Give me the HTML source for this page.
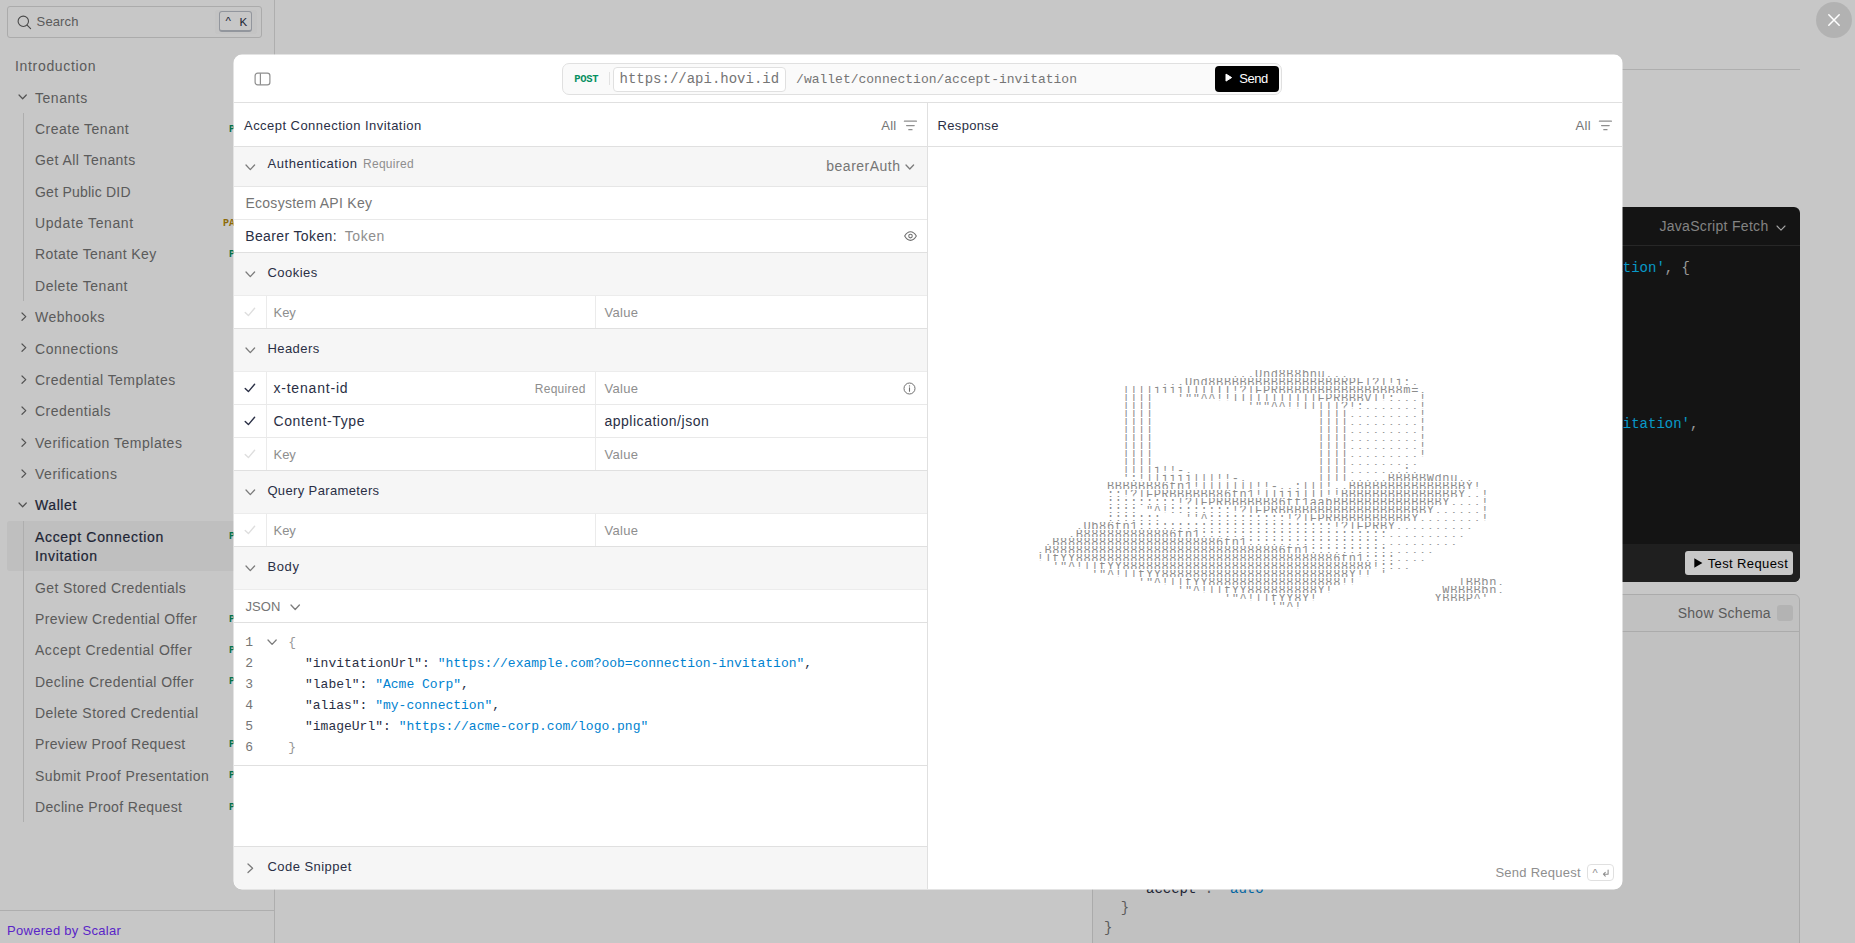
<!DOCTYPE html>
<html lang="en"><head><meta charset="utf-8"><title>Hovi API Reference</title>
<style>
*{box-sizing:border-box}
html,body{margin:0;padding:0}
body{width:1855px;height:943px;overflow:hidden;background:#fff;position:relative;
  font-family:"Liberation Sans",sans-serif;font-size:14px;color:#2a2f45;}
.abs{position:absolute}
.mono{font-family:"Liberation Mono",monospace}
svg{display:block;overflow:visible}

/* ---------- sidebar ---------- */
#sidebar{position:absolute;left:0;top:0;width:275px;height:943px;border-right:1px solid #dfdfdf;background:#fff}
#search{position:absolute;left:7px;top:6px;width:255px;height:32px;border:1px solid #dbdbdb;border-radius:3px}
#search .lbl{position:absolute;left:28.6px;top:7.4px;font-size:13px;line-height:16px;color:#757575;letter-spacing:.12px}
#search .hov{position:absolute;left:207px;top:3px;width:42px;height:24px;border-radius:3px;background:#fbfbfb}
#search .kbd{position:absolute;left:211px;top:4px;width:33px;height:21px;border:1px solid #bcc0c9;border-bottom-width:2px;border-radius:3px;background:#fff;
  font-size:11.5px;color:#2a2f45}
#nav{position:absolute;left:0;top:51.2px;width:274px}
.it{position:relative;height:31.39px;line-height:19.39px;padding:6px 0;font-size:14px;color:#757575;white-space:nowrap}
.it .t{position:absolute;left:35px;top:6px}
.it.top .t{left:15px}
.it.grp.open.act .t{color:#2a2f45;-webkit-text-stroke:.2px #2a2f45}
.it .chev{position:absolute;left:18.35px;top:11.8px}
.it .m{position:absolute;right:21px;top:5.6px;font-family:"Liberation Mono",monospace;font-weight:bold;font-size:10px;letter-spacing:0}
.m.post{color:#069061}.m.patch{color:#b5890b}.m.get{color:#0082d0}.m.del{color:#dc1b19}
.it.two{height:50.78px}
.it.sel{color:#2a2f45}
.it.sel .t{-webkit-text-stroke:.2px #2a2f45}
.selbg{position:absolute;left:7px;top:-.7px;width:260px;height:50px;border-radius:3px;background:#f5f5f5}
.vline{position:absolute;left:23px;width:1px;background:#dfdfdf}
#sfoot{position:absolute;left:0;top:910px;width:274px;height:33px;border-top:1px solid #dfdfdf}
#sfoot span{position:absolute;left:7px;top:12px;font-size:13px;line-height:16px;color:#7430ff;letter-spacing:.3px}

/* ---------- page content behind modal ---------- */
#hr1{position:absolute;left:331px;top:69px;width:1469px;height:1px;background:#dfdfdf}
#dark{position:absolute;left:1092px;top:207px;width:708px;height:375px;border-radius:6px;background:#1a1a1a;overflow:hidden}
#dark .hd{position:absolute;left:0;top:0;width:100%;height:39px;border-bottom:1px solid #323232}
#dark .lang{position:absolute;right:31.5px;top:10.5px;font-size:14px;line-height:17px;color:#a8a8a8;letter-spacing:.3px;white-space:nowrap}
#dark .chv{position:absolute;right:14.5px;top:17.5px}
#dark pre{position:absolute;left:43.5px;top:52.3px;margin:0;font-family:"Liberation Mono",monospace;font-size:14px;line-height:19.4px;color:#c4c4c4;white-space:pre}
#dark pre .s{color:#0bc4ff}
#dark .ft{position:absolute;left:0;top:337px;width:100%;height:38px;background:#282828}
#dark .btn{position:absolute;left:593px;top:344px;width:108px;height:24px;border-radius:3px;background:#fff;color:#000}
#dark .btn span{position:absolute;left:22.7px;top:4.9px;font-size:13px;line-height:16px;letter-spacing:.38px;white-space:nowrap}
#card{position:absolute;left:1092px;top:594px;width:708px;height:400px;border:1px solid #dcdcdc;border-radius:6px;background:#f8f8f8}
#card .hd{position:absolute;left:0;top:0;width:100%;height:37px;border-bottom:1px solid #dcdcdc}
#card .ss{position:absolute;left:584.7px;top:9.6px;font-size:14px;line-height:17px;color:#757575;letter-spacing:.27px;white-space:nowrap}
#card .cb{position:absolute;left:684px;top:10px;width:16px;height:16px;border-radius:3px;background:#e6e6e6}
#card pre{position:absolute;left:11px;top:0;margin:0;font-family:"Liberation Mono",monospace;font-size:14px;line-height:19.45px;color:#757575;white-space:pre}
#card pre .k{color:#2a2f45}#card pre .s{color:#0082d0}

#overlay{position:absolute;left:0;top:0;width:1855px;height:943px;background:rgba(0,0,0,.2196)}
#close{position:absolute;left:1816px;top:2px;width:36px;height:36px;border-radius:18px;background:rgba(0,0,0,.1)}
#close svg{position:absolute;left:12px;top:12px}

/* ---------- modal ---------- */
#mbg{position:absolute;left:233px;top:54px}
#modal{position:absolute;left:234px;top:55px;width:1388px;height:834px;border-radius:8px;overflow:hidden;background:#fff}

#modal .artrow{position:absolute;left:0;height:7px;width:480px;overflow:hidden}
#modal .artrow span{position:absolute;left:0;top:1.0px;font-family:"Liberation Mono",monospace;font-size:12px;letter-spacing:.6px;line-height:8px;color:#8c8c8c;white-space:pre}
</style></head>
<body>
<div id="sidebar">
<div id="search"><svg class="abs" style="left:9px;top:8px" width="15" height="15" viewBox="0 0 15 15"><circle cx="6.3" cy="6.3" r="5.2" fill="none" stroke="#5f5f5f" stroke-width="1.1"/><path d="M10.1 10.1 L13.6 13.6" stroke="#5f5f5f" stroke-width="1.1" stroke-linecap="round"/></svg><span class="lbl">Search</span><span class="hov"></span><span class="kbd"><span class="abs" style="left:5.5px;top:2.5px;line-height:13px">^</span><span class="abs" style="left:19.5px;top:3.5px;line-height:13px">K</span></span></div>
<div id="nav">
<div class="it top"><span class="t" style="letter-spacing:0.677px">Introduction</span></div>
<div class="it grp open"><span class="chev"><svg width="9.3" height="5.795999999999999" viewBox="-1 -1 9.3 5.795999999999999"><path d="M0 0 L3.65 3.796 L7.3 0" fill="none" stroke="#6a6a6a" stroke-width="1.2" stroke-linecap="round" stroke-linejoin="round"/></svg></span><span class="t" style="letter-spacing:0.544px">Tenants</span></div>
<div class="it "><span class="t" style="letter-spacing:0.492px">Create Tenant</span><span class="m post">POST</span></div>
<div class="it "><span class="t" style="letter-spacing:0.449px">Get All Tenants</span><span class="m get">GET</span></div>
<div class="it "><span class="t" style="letter-spacing:0.232px">Get Public DID</span><span class="m get">GET</span></div>
<div class="it "><span class="t" style="letter-spacing:0.607px">Update Tenant</span><span class="m patch">PATCH</span></div>
<div class="it "><span class="t" style="letter-spacing:0.392px">Rotate Tenant Key</span><span class="m post">POST</span></div>
<div class="it "><span class="t" style="letter-spacing:0.522px">Delete Tenant</span><span class="m del">DEL</span></div>
<div class="it grp"><span class="chev" style="left:20.5px;top:9.9px"><svg width="5.795999999999999" height="9.3" viewBox="-1 -1 5.795999999999999 9.3"><path d="M0 0 L3.796 3.65 L0 7.3" fill="none" stroke="#6a6a6a" stroke-width="1.2" stroke-linecap="round" stroke-linejoin="round"/></svg></span><span class="t" style="letter-spacing:0.501px">Webhooks</span></div>
<div class="it grp"><span class="chev" style="left:20.5px;top:9.9px"><svg width="5.795999999999999" height="9.3" viewBox="-1 -1 5.795999999999999 9.3"><path d="M0 0 L3.796 3.65 L0 7.3" fill="none" stroke="#6a6a6a" stroke-width="1.2" stroke-linecap="round" stroke-linejoin="round"/></svg></span><span class="t" style="letter-spacing:0.527px">Connections</span></div>
<div class="it grp"><span class="chev" style="left:20.5px;top:9.9px"><svg width="5.795999999999999" height="9.3" viewBox="-1 -1 5.795999999999999 9.3"><path d="M0 0 L3.796 3.65 L0 7.3" fill="none" stroke="#6a6a6a" stroke-width="1.2" stroke-linecap="round" stroke-linejoin="round"/></svg></span><span class="t" style="letter-spacing:0.471px">Credential Templates</span></div>
<div class="it grp"><span class="chev" style="left:20.5px;top:9.9px"><svg width="5.795999999999999" height="9.3" viewBox="-1 -1 5.795999999999999 9.3"><path d="M0 0 L3.796 3.65 L0 7.3" fill="none" stroke="#6a6a6a" stroke-width="1.2" stroke-linecap="round" stroke-linejoin="round"/></svg></span><span class="t" style="letter-spacing:0.479px">Credentials</span></div>
<div class="it grp"><span class="chev" style="left:20.5px;top:9.9px"><svg width="5.795999999999999" height="9.3" viewBox="-1 -1 5.795999999999999 9.3"><path d="M0 0 L3.796 3.65 L0 7.3" fill="none" stroke="#6a6a6a" stroke-width="1.2" stroke-linecap="round" stroke-linejoin="round"/></svg></span><span class="t" style="letter-spacing:0.523px">Verification Templates</span></div>
<div class="it grp"><span class="chev" style="left:20.5px;top:9.9px"><svg width="5.795999999999999" height="9.3" viewBox="-1 -1 5.795999999999999 9.3"><path d="M0 0 L3.796 3.65 L0 7.3" fill="none" stroke="#6a6a6a" stroke-width="1.2" stroke-linecap="round" stroke-linejoin="round"/></svg></span><span class="t" style="letter-spacing:0.535px">Verifications</span></div>
<div class="it grp open act"><span class="chev"><svg width="9.3" height="5.795999999999999" viewBox="-1 -1 9.3 5.795999999999999"><path d="M0 0 L3.65 3.796 L7.3 0" fill="none" stroke="#6a6a6a" stroke-width="1.2" stroke-linecap="round" stroke-linejoin="round"/></svg></span><span class="t" style="letter-spacing:0.585px">Wallet</span></div>
<div class="it two sel"><span class="selbg"></span><span class="t" style="letter-spacing:0.668px">Accept Connection<br>Invitation</span><span class="m post">POST</span></div>
<div class="it "><span class="t" style="letter-spacing:0.395px">Get Stored Credentials</span><span class="m get">GET</span></div>
<div class="it "><span class="t" style="letter-spacing:0.420px">Preview Credential Offer</span><span class="m post">POST</span></div>
<div class="it "><span class="t" style="letter-spacing:0.529px">Accept Credential Offer</span><span class="m post">POST</span></div>
<div class="it "><span class="t" style="letter-spacing:0.415px">Decline Credential Offer</span><span class="m post">POST</span></div>
<div class="it "><span class="t" style="letter-spacing:0.430px">Delete Stored Credential</span><span class="m del">DEL</span></div>
<div class="it "><span class="t" style="letter-spacing:0.351px">Preview Proof Request</span><span class="m post">POST</span></div>
<div class="it "><span class="t" style="letter-spacing:0.428px">Submit Proof Presentation</span><span class="m post">POST</span></div>
<div class="it "><span class="t" style="letter-spacing:0.341px">Decline Proof Request</span><span class="m post">POST</span></div>
</div>
<div class="vline" style="top:113px;height:188px"></div>
<div class="vline" style="top:521px;height:301px"></div>
<div id="sfoot"><span>Powered by Scalar</span></div>
</div>
<div id="hr1"></div>
<div id="dark"><div class="hd"></div><span class="lang">JavaScript Fetch</span><span class="chv"><svg width="10.0" height="6.16" viewBox="-1 -1 10.0 6.16"><path d="M0 0 L4.0 4.16 L8.0 0" fill="none" stroke="#d0d0d0" stroke-width="1.1" stroke-linecap="round" stroke-linejoin="round"/></svg></span><pre>fetch(<span class="s">'https://api.hovi.id/wallet/connection/accept-invitation'</span>, {
  method: <span class="s">'POST'</span>,
  headers: {
    <span class="s">'x-tenant-id'</span>: <span class="s">''</span>,
    <span class="s">'Content-Type'</span>: <span class="s">'application/json'</span>,
    Authorization: <span class="s">'Bearer YOUR_SECRET_TOKEN'</span>
  },
  body: JSON.stringify({
    invitationUrl: <span class="s">'https://example.com?oob=connection-invitation'</span>,
    label: <span class="s">'Acme Corp'</span>,
    alias: <span class="s">'my-connection'</span>,
    imageUrl: <span class="s">'https://acme-corp.com/logo.png'</span>
  })
})</pre><div class="ft"></div><div class="btn"><svg class="abs" style="left:9px;top:7px" width="9" height="10" viewBox="0 0 9 10"><path d="M0.3 0.3 L8.4 5 L0.3 9.7 Z" fill="#000"/></svg><span>Test Request</span></div></div>
<div id="card"><div class="hd"></div><span class="ss">Show Schema</span><span class="cb"></span><pre style="top:284.9px">    <span class="k">"accept"</span>: <span class="s">"auto"</span>
  }
}</pre></div>
<div id="overlay"></div>
<div id="close"><svg width="12" height="12" viewBox="0 0 12 12"><path d="M0.8 0.8 L11.2 11.2 M11.2 0.8 L0.8 11.2" stroke="#fff" stroke-width="1.5" stroke-linecap="round"/></svg></div>
<svg id="mbg" width="1391" height="837" viewBox="0 0 1391 837"><rect x="0.5" y="0.5" width="1389" height="835" rx="8.5" fill="#fff"/></svg>
<div id="modal">
<svg style="position:absolute;left:19.50px;top:17.00px" width="17" height="14" viewBox="0 0 17 14"><rect x="1.1" y="1.1" width="14.8" height="11.8" rx="2.6" fill="none" stroke="#8e8e8e" stroke-width="1.2"/><path d="M6.4 1.2 V12.8" stroke="#8e8e8e" stroke-width="1.2"/></svg>
<div style="position:absolute;left:328px;top:8px;width:720px;height:32px;border:1px solid #e0e0e0;border-radius:7px;background:#fafafa"></div>
<span style="position:absolute;left:340.30px;top:16.05px;font-size:10.5px;line-height:16.5px;color:#069061;font-family:'Liberation Mono',monospace;white-space:pre;font-weight:bold;letter-spacing:-0.301px;">POST</span>
<div style="position:absolute;left:375px;top:17px;width:1px;height:13px;background:#e2e2e2"></div>
<div style="position:absolute;left:379px;top:12px;width:173px;height:25px;border:1px solid #e0e0e0;border-radius:4px;background:#fff"></div>
<span style="position:absolute;left:385.50px;top:14.47px;font-size:14px;line-height:20px;color:#757575;font-family:'Liberation Mono',monospace;white-space:pre;">https://api.hovi.id</span>
<span style="position:absolute;left:562.10px;top:15.03px;font-size:13px;line-height:19px;color:#757575;font-family:'Liberation Mono',monospace;white-space:pre;">/wallet/connection/accept-invitation</span>
<div style="position:absolute;left:981px;top:11px;width:64px;height:26px;border-radius:4px;background:#000"></div>
<svg style="position:absolute;left:991.20px;top:18.40px" width="8" height="10" viewBox="0 0 8 10"><path d="M1 1.1 L6.6 4.6 L1 8.1 Z" fill="#fff" stroke="#fff" stroke-width="1" stroke-linejoin="round"/></svg>
<span style="position:absolute;left:1005.30px;top:14.20px;font-size:13px;line-height:19px;color:#fff;font-family:'Liberation Sans',sans-serif;white-space:pre;letter-spacing:-0.487px;">Send</span>
<div style="position:absolute;left:0px;top:47px;width:1388px;height:1px;background:#e0e0e0"></div>
<span style="position:absolute;left:10.00px;top:61.00px;font-size:13px;line-height:19px;color:#2a2f45;font-family:'Liberation Sans',sans-serif;white-space:pre;letter-spacing:0.460px;">Accept Connection Invitation</span>
<span style="position:absolute;left:647.20px;top:60.80px;font-size:13px;line-height:19px;color:#757575;font-family:'Liberation Sans',sans-serif;white-space:pre;letter-spacing:0.276px;">All</span>
<svg style="position:absolute;left:669.60px;top:65.40px" width="13" height="11" viewBox="0 0 13 11"><path d="M0.4 1.2 H12.4 M2.6 5.5 H10.2 M4.8 9.7 H8" stroke="#8e8e8e" stroke-width="1.25" stroke-linecap="round" fill="none"/></svg>
<span style="position:absolute;left:703.60px;top:60.80px;font-size:13px;line-height:19px;color:#2a2f45;font-family:'Liberation Sans',sans-serif;white-space:pre;letter-spacing:0.323px;">Response</span>
<span style="position:absolute;left:1341.40px;top:60.80px;font-size:13px;line-height:19px;color:#757575;font-family:'Liberation Sans',sans-serif;white-space:pre;letter-spacing:0.376px;">All</span>
<svg style="position:absolute;left:1364.80px;top:65.40px" width="13" height="11" viewBox="0 0 13 11"><path d="M0.4 1.2 H12.4 M2.6 5.5 H10.2 M4.8 9.7 H8" stroke="#8e8e8e" stroke-width="1.25" stroke-linecap="round" fill="none"/></svg>
<div style="position:absolute;left:0px;top:91px;width:1388px;height:1px;background:#e0e0e0"></div>
<div style="position:absolute;left:693px;top:48px;width:1px;height:786px;background:#e0e0e0"></div>
<div style="position:absolute;left:0px;top:92px;width:693px;height:39px;background:#f6f6f6"></div>
<svg style="position:absolute;left:10.70px;top:108.70px" width="10.6" height="6.601" viewBox="0 0 10.6 6.601"><path d="M1 1 L5.3 5.601 L9.6 1" fill="none" stroke="#7c7c7c" stroke-width="1.3" stroke-linecap="round" stroke-linejoin="round"/></svg>
<span style="position:absolute;left:33.60px;top:98.60px;font-size:13px;line-height:19px;color:#2a2f45;font-family:'Liberation Sans',sans-serif;white-space:pre;letter-spacing:0.531px;">Authentication</span>
<span style="position:absolute;left:129.00px;top:100.14px;font-size:12px;line-height:18px;color:#8e8e8e;font-family:'Liberation Sans',sans-serif;white-space:pre;letter-spacing:0.272px;">Required</span>
<span style="position:absolute;left:592.30px;top:100.55px;font-size:14px;line-height:20px;color:#757575;font-family:'Liberation Sans',sans-serif;white-space:pre;letter-spacing:0.492px;">bearerAuth</span>
<svg style="position:absolute;left:671.40px;top:109.17px" width="9.6" height="6.066" viewBox="0 0 9.6 6.066"><path d="M1 1 L4.8 5.066 L8.6 1" fill="none" stroke="#7c7c7c" stroke-width="1.3" stroke-linecap="round" stroke-linejoin="round"/></svg>
<div style="position:absolute;left:0px;top:131px;width:693px;height:1px;background:#e6e6e6"></div>
<span style="position:absolute;left:11.40px;top:138.15px;font-size:14px;line-height:20px;color:#757575;font-family:'Liberation Sans',sans-serif;white-space:pre;letter-spacing:0.278px;">Ecosystem API Key</span>
<div style="position:absolute;left:0px;top:164px;width:693px;height:1px;background:#e9e9e9"></div>
<span style="position:absolute;left:11.20px;top:171.15px;font-size:14px;line-height:20px;color:#2a2f45;font-family:'Liberation Sans',sans-serif;white-space:pre;letter-spacing:0.375px;">Bearer Token:</span>
<span style="position:absolute;left:110.80px;top:171.15px;font-size:14px;line-height:20px;color:#8e8e8e;font-family:'Liberation Sans',sans-serif;white-space:pre;letter-spacing:0.560px;">Token</span>
<svg style="position:absolute;left:669.50px;top:176.00px" width="13" height="10.2" viewBox="0 0 14 11"><path d="M0.7 5.5 C2.6 2.2 4.8 0.9 7 0.9 C9.2 0.9 11.4 2.2 13.3 5.5 C11.4 8.8 9.2 10.1 7 10.1 C4.8 10.1 2.6 8.8 0.7 5.5 Z" fill="none" stroke="#6f6f6f" stroke-width="1.15"/><circle cx="7" cy="5.5" r="1.9" fill="none" stroke="#6f6f6f" stroke-width="1.15"/></svg>
<div style="position:absolute;left:0px;top:197px;width:693px;height:1px;background:#e0e0e0"></div>
<div style="position:absolute;left:0px;top:198px;width:693px;height:43px;background:#f6f6f6;border-bottom:1px solid #ececec"></div><svg style="position:absolute;left:10.70px;top:215.65px" width="10.6" height="6.601" viewBox="0 0 10.6 6.601"><path d="M1 1 L5.3 5.601 L9.6 1" fill="none" stroke="#7c7c7c" stroke-width="1.3" stroke-linecap="round" stroke-linejoin="round"/></svg><span style="position:absolute;left:33.40px;top:207.70px;font-size:13px;line-height:19px;color:#2a2f45;font-family:'Liberation Sans',sans-serif;white-space:pre;letter-spacing:0.489px;">Cookies</span>
<svg style="position:absolute;left:10.00px;top:252.00px" width="12" height="10" viewBox="0 0 12 10"><path d="M1.2 5.6 L4.4 8.6 L10.6 1.2" fill="none" stroke="#dedede" stroke-width="1.4" stroke-linecap="round" stroke-linejoin="round"/></svg><div style="position:absolute;left:32px;top:241px;width:1px;height:32px;background:#ebebeb"></div><div style="position:absolute;left:361px;top:241px;width:1px;height:32px;background:#ebebeb"></div><span style="position:absolute;left:39.60px;top:247.50px;font-size:13px;line-height:19px;color:#8e8e8e;font-family:'Liberation Sans',sans-serif;white-space:pre;letter-spacing:-0.101px;">Key</span><span style="position:absolute;left:370.60px;top:247.50px;font-size:13px;line-height:19px;color:#8e8e8e;font-family:'Liberation Sans',sans-serif;white-space:pre;letter-spacing:0.278px;">Value</span><div style="position:absolute;left:0px;top:273px;width:693px;height:1px;background:#e0e0e0"></div>
<div style="position:absolute;left:0px;top:274px;width:693px;height:43px;background:#f6f6f6;border-bottom:1px solid #ececec"></div><svg style="position:absolute;left:10.70px;top:291.65px" width="10.6" height="6.601" viewBox="0 0 10.6 6.601"><path d="M1 1 L5.3 5.601 L9.6 1" fill="none" stroke="#7c7c7c" stroke-width="1.3" stroke-linecap="round" stroke-linejoin="round"/></svg><span style="position:absolute;left:33.40px;top:283.70px;font-size:13px;line-height:19px;color:#2a2f45;font-family:'Liberation Sans',sans-serif;white-space:pre;letter-spacing:0.460px;">Headers</span>
<svg style="position:absolute;left:10.00px;top:328.00px" width="12" height="10" viewBox="0 0 12 10"><path d="M1.2 5.6 L4.4 8.6 L10.6 1.2" fill="none" stroke="#2a2f45" stroke-width="1.4" stroke-linecap="round" stroke-linejoin="round"/></svg><div style="position:absolute;left:32px;top:317px;width:1px;height:32px;background:#ebebeb"></div><div style="position:absolute;left:361px;top:317px;width:1px;height:32px;background:#ebebeb"></div><span style="position:absolute;left:39.40px;top:322.65px;font-size:14px;line-height:20px;color:#2a2f45;font-family:'Liberation Sans',sans-serif;white-space:pre;letter-spacing:0.806px;">x-tenant-id</span><span style="position:absolute;left:370.60px;top:323.50px;font-size:13px;line-height:19px;color:#8e8e8e;font-family:'Liberation Sans',sans-serif;white-space:pre;letter-spacing:0.278px;">Value</span><span style="position:absolute;left:300.80px;top:324.94px;font-size:12px;line-height:18px;color:#8e8e8e;font-family:'Liberation Sans',sans-serif;white-space:pre;letter-spacing:0.258px;">Required</span><svg style="position:absolute;left:669.40px;top:326.50px" width="13" height="13" viewBox="0 0 13 13"><circle cx="6.5" cy="6.5" r="5.5" fill="none" stroke="#6f6f6f" stroke-width="1"/><path d="M6.5 5.9 V9.3" stroke="#6f6f6f" stroke-width="1.1" stroke-linecap="round"/><circle cx="6.5" cy="3.9" r="0.7" fill="#6f6f6f"/></svg><div style="position:absolute;left:0px;top:349px;width:693px;height:1px;background:#e9e9e9"></div>
<svg style="position:absolute;left:10.00px;top:361.00px" width="12" height="10" viewBox="0 0 12 10"><path d="M1.2 5.6 L4.4 8.6 L10.6 1.2" fill="none" stroke="#2a2f45" stroke-width="1.4" stroke-linecap="round" stroke-linejoin="round"/></svg><div style="position:absolute;left:32px;top:350px;width:1px;height:32px;background:#ebebeb"></div><div style="position:absolute;left:361px;top:350px;width:1px;height:32px;background:#ebebeb"></div><span style="position:absolute;left:39.40px;top:355.65px;font-size:14px;line-height:20px;color:#2a2f45;font-family:'Liberation Sans',sans-serif;white-space:pre;letter-spacing:0.650px;">Content-Type</span><span style="position:absolute;left:370.40px;top:355.65px;font-size:14px;line-height:20px;color:#2a2f45;font-family:'Liberation Sans',sans-serif;white-space:pre;letter-spacing:0.526px;">application/json</span><div style="position:absolute;left:0px;top:382px;width:693px;height:1px;background:#e9e9e9"></div>
<svg style="position:absolute;left:10.00px;top:394.00px" width="12" height="10" viewBox="0 0 12 10"><path d="M1.2 5.6 L4.4 8.6 L10.6 1.2" fill="none" stroke="#dedede" stroke-width="1.4" stroke-linecap="round" stroke-linejoin="round"/></svg><div style="position:absolute;left:32px;top:383px;width:1px;height:32px;background:#ebebeb"></div><div style="position:absolute;left:361px;top:383px;width:1px;height:32px;background:#ebebeb"></div><span style="position:absolute;left:39.60px;top:389.50px;font-size:13px;line-height:19px;color:#8e8e8e;font-family:'Liberation Sans',sans-serif;white-space:pre;letter-spacing:-0.101px;">Key</span><span style="position:absolute;left:370.60px;top:389.50px;font-size:13px;line-height:19px;color:#8e8e8e;font-family:'Liberation Sans',sans-serif;white-space:pre;letter-spacing:0.278px;">Value</span><div style="position:absolute;left:0px;top:415px;width:693px;height:1px;background:#e0e0e0"></div>
<div style="position:absolute;left:0px;top:416px;width:693px;height:43px;background:#f6f6f6;border-bottom:1px solid #ececec"></div><svg style="position:absolute;left:10.70px;top:433.65px" width="10.6" height="6.601" viewBox="0 0 10.6 6.601"><path d="M1 1 L5.3 5.601 L9.6 1" fill="none" stroke="#7c7c7c" stroke-width="1.3" stroke-linecap="round" stroke-linejoin="round"/></svg><span style="position:absolute;left:33.40px;top:425.70px;font-size:13px;line-height:19px;color:#2a2f45;font-family:'Liberation Sans',sans-serif;white-space:pre;letter-spacing:0.366px;">Query Parameters</span>
<svg style="position:absolute;left:10.00px;top:470.00px" width="12" height="10" viewBox="0 0 12 10"><path d="M1.2 5.6 L4.4 8.6 L10.6 1.2" fill="none" stroke="#dedede" stroke-width="1.4" stroke-linecap="round" stroke-linejoin="round"/></svg><div style="position:absolute;left:32px;top:459px;width:1px;height:32px;background:#ebebeb"></div><div style="position:absolute;left:361px;top:459px;width:1px;height:32px;background:#ebebeb"></div><span style="position:absolute;left:39.60px;top:465.50px;font-size:13px;line-height:19px;color:#8e8e8e;font-family:'Liberation Sans',sans-serif;white-space:pre;letter-spacing:-0.101px;">Key</span><span style="position:absolute;left:370.60px;top:465.50px;font-size:13px;line-height:19px;color:#8e8e8e;font-family:'Liberation Sans',sans-serif;white-space:pre;letter-spacing:0.278px;">Value</span><div style="position:absolute;left:0px;top:491px;width:693px;height:1px;background:#e0e0e0"></div>
<div style="position:absolute;left:0px;top:492px;width:693px;height:43px;background:#f6f6f6;border-bottom:1px solid #ececec"></div><svg style="position:absolute;left:10.70px;top:509.65px" width="10.6" height="6.601" viewBox="0 0 10.6 6.601"><path d="M1 1 L5.3 5.601 L9.6 1" fill="none" stroke="#7c7c7c" stroke-width="1.3" stroke-linecap="round" stroke-linejoin="round"/></svg><span style="position:absolute;left:33.40px;top:501.70px;font-size:13px;line-height:19px;color:#2a2f45;font-family:'Liberation Sans',sans-serif;white-space:pre;letter-spacing:0.656px;">Body</span>
<span style="position:absolute;left:11.60px;top:541.50px;font-size:13px;line-height:19px;color:#757575;font-family:'Liberation Sans',sans-serif;white-space:pre;letter-spacing:0.009px;">JSON</span>
<svg style="position:absolute;left:55.80px;top:548.65px" width="10.4" height="6.494000000000001" viewBox="0 0 10.4 6.494000000000001"><path d="M1 1 L5.2 5.494000000000001 L9.4 1" fill="none" stroke="#7c7c7c" stroke-width="1.3" stroke-linecap="round" stroke-linejoin="round"/></svg>
<div style="position:absolute;left:0px;top:567px;width:693px;height:1px;background:#e0e0e0"></div>
<span style="position:absolute;left:11.20px;top:578.03px;font-size:13px;line-height:19px;color:#757575;font-family:'Liberation Mono',monospace;white-space:pre;">1</span>
<span style="position:absolute;left:55.40px;top:578.03px;font-family:'Liberation Mono',monospace;font-size:13px;line-height:19px;white-space:pre"><span style="color:#989898;position:relative;left:-1.2px">{</span></span>
<span style="position:absolute;left:11.20px;top:599.03px;font-size:13px;line-height:19px;color:#757575;font-family:'Liberation Mono',monospace;white-space:pre;">2</span>
<span style="position:absolute;left:55.40px;top:599.03px;font-family:'Liberation Mono',monospace;font-size:13px;line-height:19px;white-space:pre"><span style="color:#2a2f45">  "invitationUrl"</span><span style="color:#2a2f45">: </span><span style="color:#0082d0">"https://example.com?oob=connection-invitation"</span><span style="color:#2a2f45">,</span></span>
<span style="position:absolute;left:11.20px;top:620.03px;font-size:13px;line-height:19px;color:#757575;font-family:'Liberation Mono',monospace;white-space:pre;">3</span>
<span style="position:absolute;left:55.40px;top:620.03px;font-family:'Liberation Mono',monospace;font-size:13px;line-height:19px;white-space:pre"><span style="color:#2a2f45">  "label"</span><span style="color:#2a2f45">: </span><span style="color:#0082d0">"Acme Corp"</span><span style="color:#2a2f45">,</span></span>
<span style="position:absolute;left:11.20px;top:641.03px;font-size:13px;line-height:19px;color:#757575;font-family:'Liberation Mono',monospace;white-space:pre;">4</span>
<span style="position:absolute;left:55.40px;top:641.03px;font-family:'Liberation Mono',monospace;font-size:13px;line-height:19px;white-space:pre"><span style="color:#2a2f45">  "alias"</span><span style="color:#2a2f45">: </span><span style="color:#0082d0">"my-connection"</span><span style="color:#2a2f45">,</span></span>
<span style="position:absolute;left:11.20px;top:662.03px;font-size:13px;line-height:19px;color:#757575;font-family:'Liberation Mono',monospace;white-space:pre;">5</span>
<span style="position:absolute;left:55.40px;top:662.03px;font-family:'Liberation Mono',monospace;font-size:13px;line-height:19px;white-space:pre"><span style="color:#2a2f45">  "imageUrl"</span><span style="color:#2a2f45">: </span><span style="color:#0082d0">"https://acme-corp.com/logo.png"</span></span>
<span style="position:absolute;left:11.20px;top:683.03px;font-size:13px;line-height:19px;color:#757575;font-family:'Liberation Mono',monospace;white-space:pre;">6</span>
<span style="position:absolute;left:55.40px;top:683.03px;font-family:'Liberation Mono',monospace;font-size:13px;line-height:19px;white-space:pre"><span style="color:#989898;position:relative;left:-1.2px">}</span></span>
<svg style="position:absolute;left:33.10px;top:583.61px" width="10.2" height="6.387" viewBox="0 0 10.2 6.387"><path d="M1 1 L5.1 5.387 L9.2 1" fill="none" stroke="#7c7c7c" stroke-width="1.3" stroke-linecap="round" stroke-linejoin="round"/></svg>
<div style="position:absolute;left:0px;top:710px;width:693px;height:1px;background:#e0e0e0"></div>
<div style="position:absolute;left:0px;top:791px;width:693px;height:1px;background:#e0e0e0"></div>
<div style="position:absolute;left:0px;top:792px;width:693px;height:42px;background:#f6f6f6"></div>
<svg style="position:absolute;left:12.70px;top:807.90px" width="6.601" height="10.6" viewBox="0 0 6.601 10.6"><path d="M1 1 L5.601 5.3 L1 9.6" fill="none" stroke="#7c7c7c" stroke-width="1.3" stroke-linecap="round" stroke-linejoin="round"/></svg>
<span style="position:absolute;left:33.40px;top:801.70px;font-size:13px;line-height:19px;color:#2a2f45;font-family:'Liberation Sans',sans-serif;white-space:pre;letter-spacing:0.465px;">Code Snippet</span>
<div style="position:absolute;left:802.7px;top:315px;width:480px;height:240px">
<div class="artrow" style="top:0px"><span>                         ...Und8B8bnu...</span></div>
<div class="artrow" style="top:8px"><span>                ...Und8BBBBBBBBBBBBBBBBRPFl?l!i:.</span></div>
<div class="artrow" style="top:16px"><span>           ||||iiiiIIIIII!?lFPRBBBBBBBBBBBBBBB8m=.</span></div>
<div class="artrow" style="top:24px"><span>           ||||   '""^^!!lllllllllllFPRBBBVl!:...!</span></div>
<div class="artrow" style="top:32px"><span>           ||||            '""^^!!|||||?!:.......!</span></div>
<div class="artrow" style="top:40px"><span>           ||||                     ||||.........!</span></div>
<div class="artrow" style="top:48px"><span>           ||||                     ||||.........!</span></div>
<div class="artrow" style="top:56px"><span>           ||||                     ||||.........!</span></div>
<div class="artrow" style="top:64px"><span>           ||||                     ||||.........!</span></div>
<div class="artrow" style="top:72px"><span>           ||||                     ||||.........!</span></div>
<div class="artrow" style="top:80px"><span>           ||||                     ||||.........!</span></div>
<div class="artrow" style="top:88px"><span>           ||||                     ||||.........</span></div>
<div class="artrow" style="top:96px"><span>           ||||i!!-.                ||||.......:.</span></div>
<div class="artrow" style="top:104px"><span>           ':!||iiii|||!!-.         ||||.....BBBBBWdnu..</span></div>
<div class="artrow" style="top:112px"><span>         BBBBBB86tn1!|||||||!!-..:|||!..BBBBBBBBBBBBBBBY!</span></div>
<div class="artrow" style="top:120px"><span>         ::!?lFPRBBBBBB86tn1!lliiilll!!BBBBBBBBBBBBBBBY..!</span></div>
<div class="artrow" style="top:128px"><span>         :::::::::!?lFPRBBBBBB86tt1aabBBBBBBBBBBBBBBY....!</span></div>
<div class="artrow" style="top:136px"><span>         :::: "^!::::::::!?lFPRBBBBBBBBBBBBBBBBBBBY......!</span></div>
<div class="artrow" style="top:144px"><span>         :::::::   ''^::::::::::!?lFPRBBBBBBBBBBY........!</span></div>
<div class="artrow" style="top:152px"><span>     .Ub86tn1:::::::::::::::::::::::::!?lFPRBY..........</span></div>
<div class="artrow" style="top:160px"><span>    .B888888888886tn1::::::::::::::::::::::::..........</span></div>
<div class="artrow" style="top:168px"><span> .B888888888888888888886tn1:::::::::::::::::..........</span></div>
<div class="artrow" style="top:176px"><span>.B888888888888888888888888888886tn1::::::::::......</span></div>
<div class="artrow" style="top:184px"><span>!ltYY8888888888888888888888888888888886tn1::::....</span></div>
<div class="artrow" style="top:192px"><span>  '"^!||tYY88888888888888888888888888888888!::..</span></div>
<div class="artrow" style="top:200px"><span>       '"^!||tYY888888888888888888888888Y!! '</span></div>
<div class="artrow" style="top:208px"><span>             '"^!||tYY88888888888888888!!             lBBbn.</span></div>
<div class="artrow" style="top:216px"><span>                  '"^!||tYY888888888Y!              WBBBBbn.</span></div>
<div class="artrow" style="top:224px"><span>                        '"^!||tYY8Y!               YBBBP^'</span></div>
<div class="artrow" style="top:232px"><span>                              '"^!</span></div>
</div>
<span style="position:absolute;left:1261.40px;top:807.50px;font-size:13px;line-height:19px;color:#8e8e8e;font-family:'Liberation Sans',sans-serif;white-space:pre;letter-spacing:0.255px;">Send Request</span>
<div style="position:absolute;left:1353px;top:809px;width:27px;height:17px;border:1px solid #e0e0e0;border-radius:4px"></div>
<span style="position:absolute;left:1358.40px;top:810.19px;font-size:11px;line-height:17px;color:#8e8e8e;font-family:'Liberation Sans',sans-serif;white-space:pre;">^</span>
<svg style="position:absolute;left:1367.50px;top:813.50px" width="8" height="8" viewBox="0 0 8 8"><path d="M6.1 0.9 V5.2 H1.5 M3.3 3.3 L1.4 5.2 L3.3 7.1" fill="none" stroke="#8e8e8e" stroke-width="1.05" stroke-linecap="round" stroke-linejoin="round"/></svg>
</div>
</body></html>
